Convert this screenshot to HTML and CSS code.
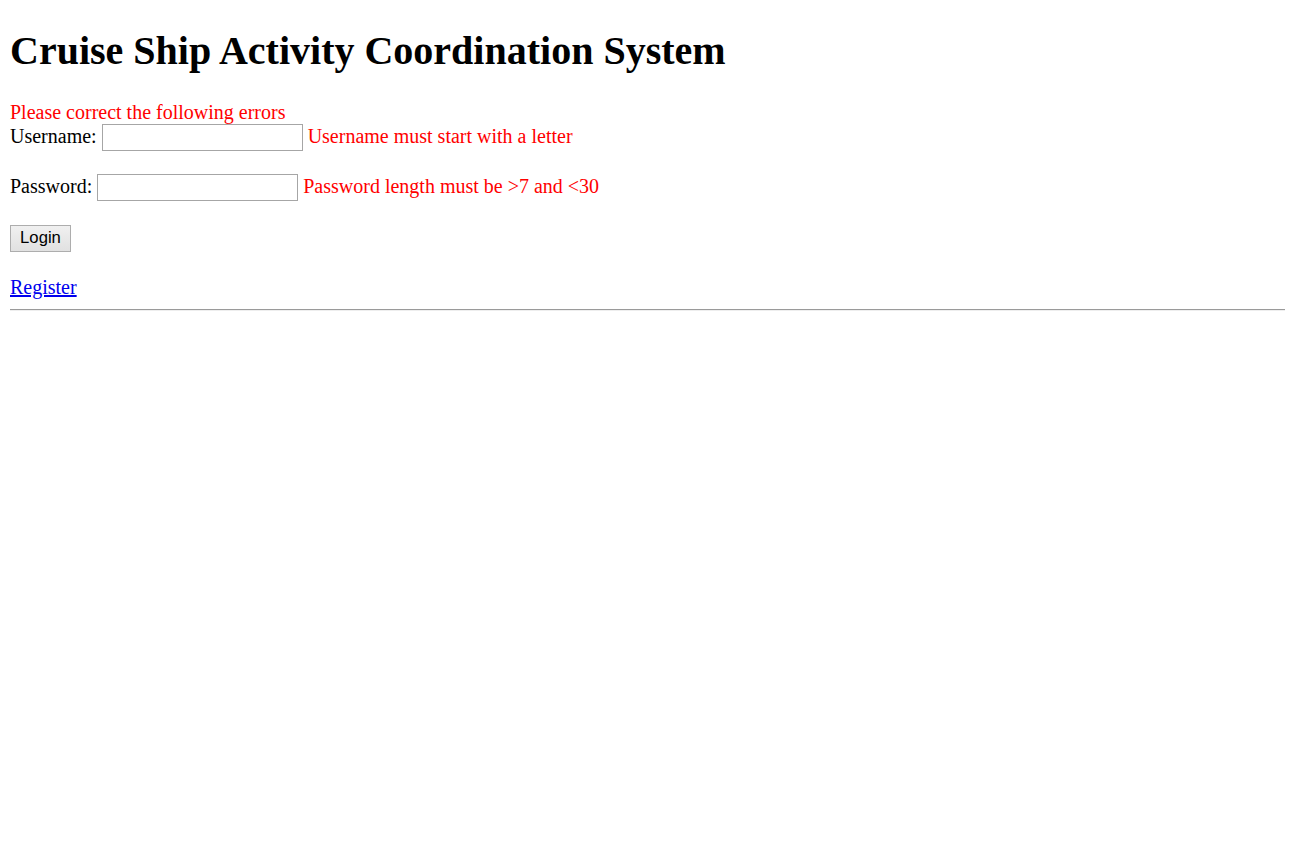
FILE: index.html
```html
<!DOCTYPE html>
<html>
<head>
<meta charset="utf-8">
<title>Cruise Ship Activity Coordination System</title>
<link rel="stylesheet" href="styles.css">
</head>
<body class="page">
<h1 class="title">Cruise Ship Activity Coordination System</h1>
<div class="errors">Please correct the following errors</div>
<form class="login-form">
  <div class="field">Username: <input class="text-input" type="text"> <span class="error">Username must start with a letter</span></div>
  <div class="field field-last">Password: <input class="text-input" type="password"> <span class="error">Password length must be &gt;7 and &lt;30</span></div>
  <div class="actions"><button class="btn" type="button">Login</button></div>
</form>
<div class="links"><a class="link" href="#">Register</a></div>
<hr class="rule">
</body>
</html>
```

FILE: styles.css
```css
html, body {
  background: #fff;
}
.page {
  margin: 10px;
  font-family: "Liberation Serif", "Times New Roman", serif;
  font-size: 20px;
  color: #000;
}
.title {
  font-size: 40px;
  font-weight: bold;
  margin: 16.8px 0 26.8px;
}
.errors {
  color: #ff0000;
}
.login-form {
  margin: 0;
}
.field {
  margin-bottom: 23px;
}
.field-last {
  margin-bottom: 24px;
}
.text-input {
  width: 197px;
  height: 23px;
  box-sizing: content-box;
  padding: 1px;
  border: 1px solid #a6a6a6;
  font-family: "Liberation Sans", Arial, sans-serif;
  font-size: 16.67px;
  vertical-align: baseline;
  margin: 0;
}
.error {
  color: #ff0000;
}
.actions {
  margin-bottom: 24px;
}
.btn {
  font-family: "Liberation Sans", Arial, sans-serif;
  font-size: 16.67px;
  width: 61px;
  height: 27px;
  padding: 0;
  margin: 0;
  border: 1px solid #adadad;
  border-radius: 0;
  background: linear-gradient(#f0f0f0, #e1e1e1);
  color: #000;
}
.link {
  color: #0000ee;
}
.rule {
  margin: 10px 0;
  border: 0;
  border-top: 1px solid #9a9a9a;
  border-bottom: 1px solid #eeeeee;
  height: 0;
}
```
